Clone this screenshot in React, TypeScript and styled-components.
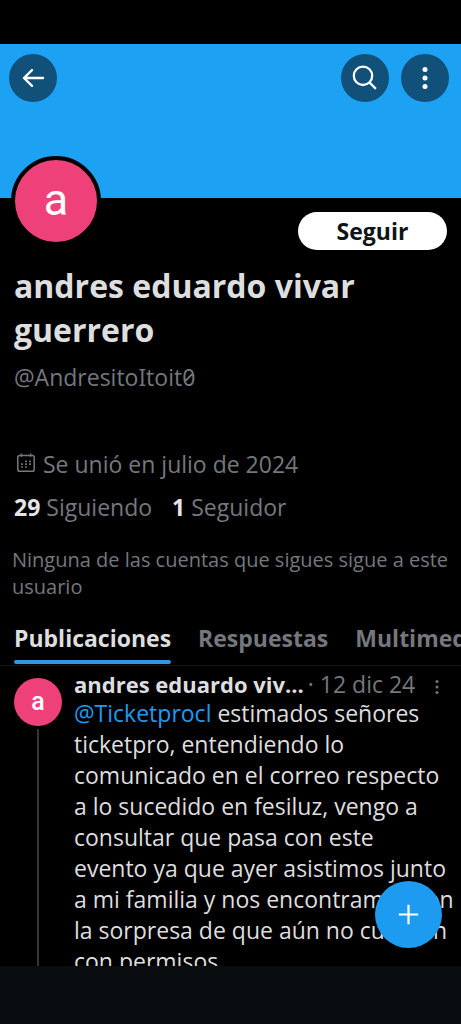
import React from "react";
import styled, { createGlobalStyle } from "styled-components";

const GlobalStyle = createGlobalStyle`
  *, *::before, *::after { box-sizing: border-box; }
  body {
    margin: 0;
    background: #000;
    color: #dddedf;
    font-family: "Open Sans", "Noto Sans", sans-serif;
  }
  button { font: inherit; border: 0; padding: 0; cursor: pointer; }
  a { color: inherit; text-decoration: none; }
  h1, h2, p { margin: 0; }
`;

const muted = "#74787c";
const blue = "#1d9bf0";
const pink = "#ef4179";

const Screen = styled.div`
  display: flex;
  flex-direction: column;
  height: 100vh;
  overflow: hidden;
  position: relative;
`;

const StatusBar = styled.div`
  flex: none;
  height: 44px;
`;

const Banner = styled.header`
  flex: none;
  display: flex;
  align-items: flex-start;
  gap: 12px;
  height: 154px;
  padding: 10px 12px 0 9px;
  background: #1da1f2;
`;

const RoundButton = styled.button<{ $push?: boolean }>`
  display: grid;
  place-items: center;
  width: 48px;
  height: 48px;
  margin-right: ${(p) => (p.$push ? "auto" : "0")};
  border-radius: 50%;
  background: #115078;
  color: #fff;
`;

const Profile = styled.section`
  flex: none;
  padding: 0 14px;
`;

const ProfileTop = styled.div`
  display: flex;
  justify-content: space-between;
  height: 66px;
`;

const Avatar = styled.div<{ $large?: boolean }>`
  flex: none;
  display: grid;
  place-items: center;
  width: ${(p) => (p.$large ? 90 : 48)}px;
  height: ${(p) => (p.$large ? 90 : 48)}px;
  margin: ${(p) => (p.$large ? "-42px 0 0 -3px" : "0")};
  padding-bottom: ${(p) => (p.$large ? 4 : 2)}px;
  border: ${(p) => (p.$large ? "4px solid #000" : "0")};
  border-radius: 50%;
  background: ${pink};
  color: #fff;
  font-family: Roboto, sans-serif;
  font-size: ${(p) => (p.$large ? 45 : 25)}px;
  font-weight: ${(p) => (p.$large ? 400 : 500)};
  line-height: 1;
`;

const FollowButton = styled.button`
  width: 149px;
  height: 38px;
  margin-top: 14px;
  border-radius: 19px;
  background: #fff;
  color: #0f1419;
  font-size: 23px;
  font-weight: 700;
  line-height: 38px;
`;

const Name = styled.h1`
  font-size: 32px;
  font-weight: 700;
  line-height: 44px;
`;

const Handle = styled.p`
  margin-top: 9px;
  color: ${muted};
  font-size: 23px;
  line-height: 32px;
  font-feature-settings: "zero", "ss01";
`;

const Joined = styled.p`
  display: flex;
  align-items: center;
  gap: 8px;
  margin-top: 55px;
  padding-left: 3px;
  color: ${muted};
  font-size: 23px;
  line-height: 32px;
`;

const Counts = styled.div`
  display: flex;
  gap: 20px;
  margin-top: 11px;
  color: ${muted};
  font-size: 23px;
  line-height: 32px;
`;

const Count = styled.a`
  display: flex;
  gap: 6px;
  & strong { color: #e4e5e6; font-weight: 700; }
`;

const Mutuals = styled.p`
  margin: 23px -6px 0 -2px;
  color: ${muted};
  font-size: 20px;
  line-height: 27px;
`;

const Tabs = styled.nav`
  flex: none;
  display: flex;
  gap: 27px;
  height: 56px;
  margin-top: 10px;
  padding-left: 14px;
  border-bottom: 1px solid #16181a;
  overflow: hidden;
`;

const Tab = styled.a<{ $active?: boolean }>`
  flex: none;
  display: flex;
  flex-direction: column;
  justify-content: space-between;
  height: 54px;
  padding-top: 12px;
  color: ${(p) => (p.$active ? "#dddedf" : muted)};
  font-size: 23px;
  font-weight: 700;
  line-height: 32px;
  &::after {
    content: "";
    height: 4px;
    border-radius: 2px;
    background: ${(p) => (p.$active ? "#2b97e6" : "transparent")};
  }
`;

const Timeline = styled.main`
  flex: 1;
  min-height: 0;
  overflow: hidden;
`;

const Post = styled.article`
  display: flex;
  gap: 12px;
  padding: 5px 14px 0;
`;

const ThreadColumn = styled.div`
  flex: none;
  display: flex;
  flex-direction: column;
  align-items: center;
  gap: 3px;
  width: 48px;
  padding-top: 7px;
`;

const ThreadLine = styled.div`
  flex: 1;
  width: 2px;
  background: #333639;
`;

const PostBody = styled.div`
  flex: 1;
  min-width: 0;
`;

const PostHeader = styled.div`
  display: flex;
  align-items: center;
  height: 27px;
  font-size: 23px;
  line-height: 27px;
  white-space: nowrap;
`;

const Author = styled.h2`
  font-size: 22px;
  font-weight: 700;
  line-height: 27px;
`;

const PostDate = styled.span`
  flex: 1;
  margin-left: 4px;
  color: ${muted};
`;

const MoreButton = styled.button`
  display: grid;
  place-items: center;
  width: 20px;
  height: 27px;
  padding-top: 4px;
  background: none;
  color: ${muted};
`;

const PostText = styled.p`
  margin-right: -8px;
  font-size: 23px;
  line-height: 31px;
  & a { color: ${blue}; }
`;

const Compose = styled.button`
  position: absolute;
  right: 19px;
  bottom: 76px;
  display: grid;
  place-items: center;
  width: 67px;
  height: 67px;
  border-radius: 50%;
  background: ${blue};
  color: #fff;
`;

const BottomBar = styled.div`
  flex: none;
  height: 58px;
  background: #0a0d10;
`;

const ArrowIcon = () => (
  <svg width="24" height="24" viewBox="0 0 24 24" fill="none" stroke="currentColor" strokeWidth="2.4" strokeLinecap="round" strokeLinejoin="round">
    <path d="M22 12H3M11 4.2 3 12l8 7.8" />
  </svg>
);

const SearchIcon = () => (
  <svg width="26" height="26" viewBox="0 0 26 26" fill="none" stroke="currentColor" strokeWidth="2.3">
    <circle cx="11" cy="10.8" r="9.2" />
    <path d="m17.3 17.3 6.6 6.6" />
  </svg>
);

const DotsIcon = ({ size, r, step }: { size: number; r: number; step: number }) => (
  <svg width={size} height={size} viewBox={`0 0 ${size} ${size}`} fill="currentColor">
    {[-1, 0, 1].map((n) => (
      <circle key={n} cx={size / 2} cy={size / 2 + n * step} r={r} />
    ))}
  </svg>
);

const CalendarIcon = () => (
  <svg width="18" height="22" viewBox="0 0 18 22" fill="none" stroke="currentColor" strokeWidth="1.5">
    <rect x="0.8" y="2.4" width="16.4" height="15.8" rx="1.8" />
    <path d="M4.4 0.6v3.2M13.6 0.6v3.2" />
    <path d="M8.1 8.4h1.8M12.1 8.4h1.8M4.1 11.2h1.8M8.1 11.2h1.8M12.1 11.2h1.8M4.1 14h1.8M8.1 14h1.8" strokeWidth="1.7" />
  </svg>
);

const PlusIcon = () => (
  <svg width="21" height="21" viewBox="0 0 21 21" stroke="currentColor" strokeWidth="2.2">
    <path d="M10.5 0.8v19.4M0.8 10.5h19.4" />
  </svg>
);

export default function App() {
  return (
    <Screen>
      <GlobalStyle />
      <StatusBar />
      <Banner>
        <RoundButton $push aria-label="Atrás"><ArrowIcon /></RoundButton>
        <RoundButton aria-label="Buscar"><SearchIcon /></RoundButton>
        <RoundButton aria-label="Más opciones"><DotsIcon size={24} r={2.5} step={8.4} /></RoundButton>
      </Banner>
      <Profile>
        <ProfileTop>
          <Avatar $large>a</Avatar>
          <FollowButton>Seguir</FollowButton>
        </ProfileTop>
        <Name>andres eduardo vivar guerrero</Name>
        <Handle>@AndresitoItoit0</Handle>
        <Joined><CalendarIcon />Se unió en julio de 2024</Joined>
        <Counts>
          <Count href="#siguiendo"><strong>29</strong> Siguiendo</Count>
          <Count href="#seguidores"><strong>1</strong> Seguidor</Count>
        </Counts>
        <Mutuals>Ninguna de las cuentas que sigues sigue a este usuario</Mutuals>
      </Profile>
      <Tabs>
        <Tab href="#publicaciones" $active>Publicaciones</Tab>
        <Tab href="#respuestas">Respuestas</Tab>
        <Tab href="#multimedia">Multimedia</Tab>
      </Tabs>
      <Timeline>
        <Post>
          <ThreadColumn>
            <Avatar>a</Avatar>
            <ThreadLine />
          </ThreadColumn>
          <PostBody>
            <PostHeader>
              <Author>andres eduardo viv...</Author>
              <PostDate>· 12 dic 24</PostDate>
              <MoreButton aria-label="Más opciones de la publicación"><DotsIcon size={16} r={1.5} step={5.5} /></MoreButton>
            </PostHeader>
            <PostText>
              <a href="#ticketprocl">@Ticketprocl</a> estimados señores ticketpro, entendiendo lo
              comunicado en el correo respecto a lo sucedido en fesiluz, vengo a consultar que pasa
              con este<br />
              evento ya que ayer asistimos junto<br />
              a mi familia y nos encontramos con la
              sorpresa de que aún no cuentan con permisos
            </PostText>
          </PostBody>
        </Post>
      </Timeline>
      <Compose aria-label="Redactar"><PlusIcon /></Compose>
      <BottomBar />
    </Screen>
  );
}
